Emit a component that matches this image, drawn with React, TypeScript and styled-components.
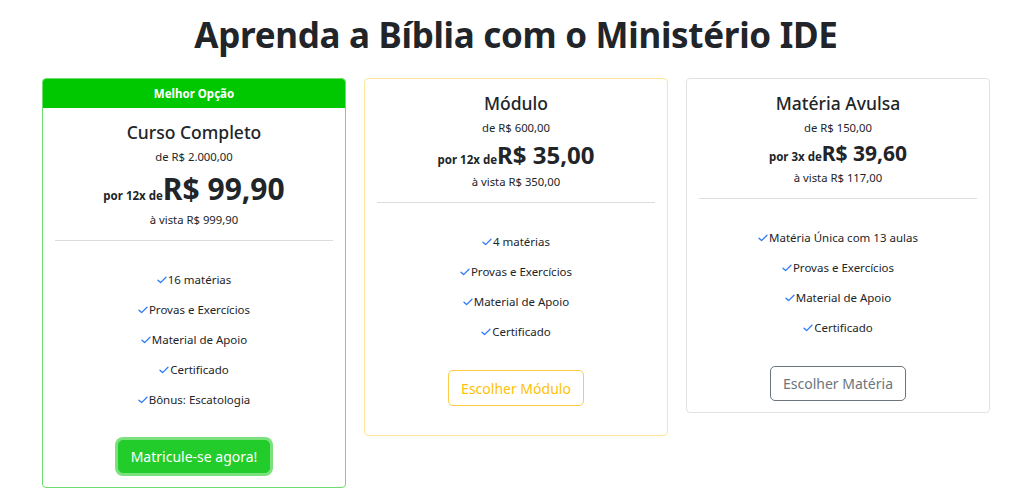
import React from "react";
import styled, { createGlobalStyle } from "styled-components";

const Global = createGlobalStyle`
  html, body { margin: 0; padding: 0; background: #ffffff; }
  body { font-family: "Noto Sans", "Open Sans", sans-serif; color: #212529; }
`;

const Page = styled.div`
  width: 1024px;
  padding: 0 34px 0 42px;
  box-sizing: border-box;
`;

const Heading = styled.h1`
  margin: 0;
  height: 72px;
  line-height: 70px;
  text-align: center;
  font-size: 35px;
  font-weight: 700;
  letter-spacing: -0.3px;
`;

const Row = styled.div`
  display: flex;
  align-items: flex-start;
  gap: 18px;
  margin-top: 6px;
`;

const Card = styled.div<{ $border: string; $bottom: number }>`
  width: 304px;
  box-sizing: border-box;
  border: 1px solid ${(p) => p.$border};
  border-radius: 4px;
  overflow: hidden;
  padding-bottom: ${(p) => p.$bottom}px;
  background: #fff;
`;

const Header = styled.div`
  height: 29px;
  background: #00c800;
  color: #fff;
  font-size: 11.5px;
  font-weight: 700;
  display: flex;
  align-items: center;
  justify-content: center;
`;

const Body = styled.div`
  padding: 12px 12px 0;
  display: flex;
  flex-direction: column;
  align-items: center;
`;

const Title = styled.div`
  height: 24px;
  line-height: 24px;
  font-size: 17.5px;
  font-weight: 500;
`;

const Small = styled.div<{ $top?: number }>`
  height: 18px;
  line-height: 18px;
  font-size: 11.3px;
  margin-top: ${(p) => p.$top ?? 0}px;
`;

const PriceRow = styled.div<{ $h: number }>`
  height: ${(p) => p.$h}px;
  line-height: ${(p) => p.$h}px;
  white-space: nowrap;
`;

const Per = styled.span`
  font-size: 11.5px;
  font-weight: 700;
`;

const Big = styled.span<{ $size: number }>`
  font-size: ${(p) => p.$size}px;
  font-weight: 700;
`;

const Rule = styled.hr`
  align-self: stretch;
  margin: 11px 0 0;
  border: 0;
  border-top: 1px solid #dcdcdc;
`;

const List = styled.ul`
  list-style: none;
  margin: 24px 0 0;
  padding: 0;
  display: flex;
  flex-direction: column;
  align-items: center;
`;

const Item = styled.li`
  height: 30px;
  line-height: 30px;
  font-size: 11.5px;
  display: flex;
  align-items: center;
  gap: 1px;
`;

const Btn = styled.button<{ $variant: "success" | "warning" | "secondary" }>`
  margin-top: 23px;
  font-family: inherit;
  font-size: 14px;
  border-radius: 5px;
  cursor: pointer;
  padding: 0 12px;
  ${(p) =>
    p.$variant === "success"
      ? `
    height: 33px;
    margin-top: 25px;
    background: #22cc2a;
    color: #fff;
    border: 1px solid #22cc2a;
    box-shadow: 0 0 0 3px #7be07e;
  `
      : p.$variant === "warning"
      ? `
    height: 36px;
    background: #fff;
    color: #ffc107;
    border: 1px solid #ffc94a;
  `
      : `
    height: 35px;
    background: #fff;
    color: #6c757d;
    border: 1px solid #6c757d;
  `}
`;

const Check = () => (
  <svg width="10" height="8" viewBox="0 0 10 8" fill="none">
    <path d="M1 4.2 L3.6 6.6 L9 1.2" stroke="#2f7cf6" strokeWidth="1.3" strokeLinecap="round" strokeLinejoin="round" />
  </svg>
);

type Plan = {
  header?: string;
  title: string;
  from: string;
  per: string;
  price: string;
  size: number;
  rowH: number;
  cash: string;
  items: string[];
  button: string;
  variant: "success" | "warning" | "secondary";
  border: string;
  bottom: number;
};

const plans: Plan[] = [
  {
    header: "Melhor Opção",
    title: "Curso Completo",
    from: "de R$ 2.000,00",
    per: "por 12x de",
    price: "R$ 99,90",
    size: 30,
    rowH: 45,
    cash: "à vista R$ 999,90",
    items: ["16 matérias", "Provas e Exercícios", "Material de Apoio", "Certificado", "Bônus: Escatologia"],
    button: "Matricule-se agora!",
    variant: "success",
    border: "#6fdc6f",
    bottom: 14,
  },
  {
    title: "Módulo",
    from: "de R$ 600,00",
    per: "por 12x de",
    price: "R$ 35,00",
    size: 24,
    rowH: 36,
    cash: "à vista R$ 350,00",
    items: ["4 matérias", "Provas e Exercícios", "Material de Apoio", "Certificado"],
    button: "Escolher Módulo",
    variant: "warning",
    border: "#fde59c",
    bottom: 29,
  },
  {
    title: "Matéria Avulsa",
    from: "de R$ 150,00",
    per: "por 3x de",
    price: "R$ 39,60",
    size: 21,
    rowH: 32,
    cash: "à vista R$ 117,00",
    items: ["Matéria Única com 13 aulas", "Provas e Exercícios", "Material de Apoio", "Certificado"],
    button: "Escolher Matéria",
    variant: "secondary",
    border: "#e2e2e2",
    bottom: 11,
  },
];

export default function App() {
  return (
    <>
      <Global />
      <Page>
        <Heading>Aprenda a Bíblia com o Ministério IDE</Heading>
        <Row>
          {plans.map((p) => (
            <Card key={p.title} $border={p.border} $bottom={p.bottom}>
              {p.header && <Header>{p.header}</Header>}
              <Body>
                <Title>{p.title}</Title>
                <Small $top={4}>{p.from}</Small>
                <PriceRow $h={p.rowH}>
                  <Per>{p.per}</Per>
                  <Big $size={p.size}>{p.price}</Big>
                </PriceRow>
                <Small>{p.cash}</Small>
                <Rule />
                <List>
                  {p.items.map((it) => (
                    <Item key={it}>
                      <Check />
                      {it}
                    </Item>
                  ))}
                </List>
                <Btn $variant={p.variant}>{p.button}</Btn>
              </Body>
            </Card>
          ))}
        </Row>
      </Page>
    </>
  );
}
